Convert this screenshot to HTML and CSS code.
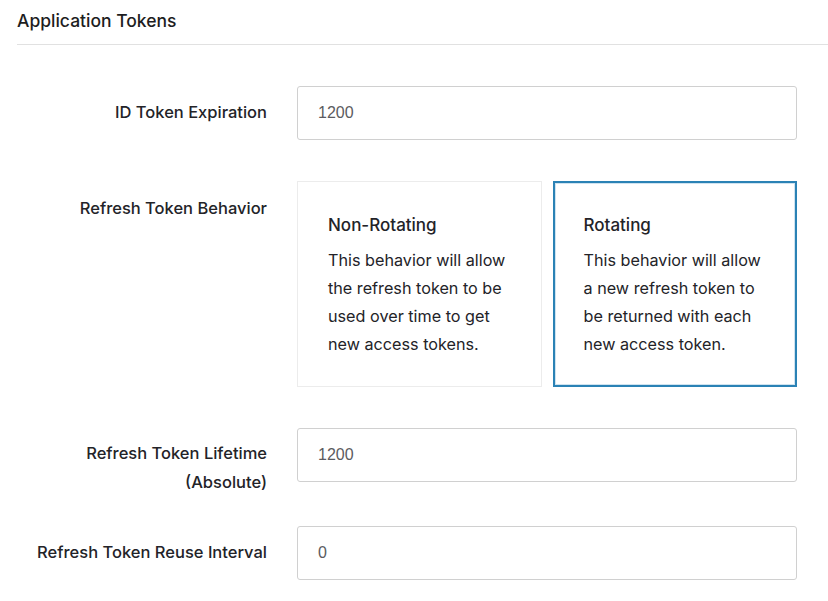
FILE: index.html
```html
<!DOCTYPE html>
<html>
<head>
<meta charset="utf-8">
<link rel="stylesheet" href="styles.css">
</head>
<body>
<section class="panel">
  <h2 class="panel-title">Application Tokens</h2>
  <div class="form">
    <div class="row row-input">
      <label class="label">ID Token Expiration</label>
      <div class="field"><input class="input" type="text" value="1200"></div>
    </div>
    <div class="row row-cards">
      <label class="label label-cards">Refresh Token Behavior</label>
      <div class="field cards">
        <div class="card">
          <div class="card-title">Non-Rotating</div>
          <p class="card-text">This behavior will allow the refresh token to be used over time to get new access tokens.</p>
        </div>
        <div class="card card-selected">
          <div class="card-title">Rotating</div>
          <p class="card-text">This behavior will allow a new refresh token to be returned with each new access token.</p>
        </div>
      </div>
    </div>
    <div class="row row-input row-two">
      <label class="label label-two">Refresh Token Lifetime (Absolute)</label>
      <div class="field"><input class="input" type="text" value="1200"></div>
    </div>
    <div class="row row-input row-last">
      <label class="label">Refresh Token Reuse Interval</label>
      <div class="field"><input class="input" type="text" value="0"></div>
    </div>
  </div>
</section>
</body>
</html>
```

FILE: styles.css
```css
* { box-sizing: border-box; }
html, body { margin: 0; padding: 0; background: #fff; }
body {
  font-family: Inter, "Noto Sans", sans-serif;
  color: #1f1f24;
  width: 828px;
}
.panel { padding-left: 17px; }
.panel-title {
  margin: 0;
  font-size: 17.5px;
  font-weight: 500;
  line-height: 22px;
  padding-top: 10px;
  padding-bottom: 12px;
  border-bottom: 1px solid #e1e1e1;
  color: #1d1d21;
}
.form { padding-top: 41px; }
.row {
  display: flex;
  align-items: flex-start;
}
.label {
  width: 250px;
  text-align: right;
  font-size: 16.5px;
  font-weight: 500;
  line-height: 29px;
  color: #232328;
  flex: none;
}
.row-input .label { padding-top: 12px; }
.field {
  margin-left: 30px;
  width: 500px;
  flex: none;
}
.input {
  display: block;
  width: 500px;
  height: 54px;
  border: 1px solid #d0d0d0;
  border-radius: 3px;
  padding: 0 20px;
  font-family: "Liberation Sans", Arial, sans-serif;
  font-size: 16px;
  color: #5b5b60;
  background: #fff;
  outline: none;
}
.row-cards { margin-top: 41px; }
.label-cards { padding-top: 13px; }
.cards {
  display: flex;
  gap: 11px;
}
.card {
  width: 245px;
  height: 206px;
  border: 1px solid #ececec;
  padding: 29px 30px 0 30px;
}
.card-selected {
  border: 2px solid #2b82b5;
  box-shadow: inset 0 0 0 1px #cfe3f0;
  padding: 28px 30px 0 29px;
}
.card-title {
  font-size: 17px;
  font-weight: 500;
  line-height: 28px;
  color: #232328;
}
.card-text {
  margin: 7px 0 0;
  font-size: 16.2px;
  font-weight: 400;
  line-height: 28px;
  color: #232328;
}
.row-two { margin-top: 41px; }
.row-two .label { padding-top: 11px; }
.row-last { margin-top: 29px; }
.row-last .label { padding-top: 12px; }
```
